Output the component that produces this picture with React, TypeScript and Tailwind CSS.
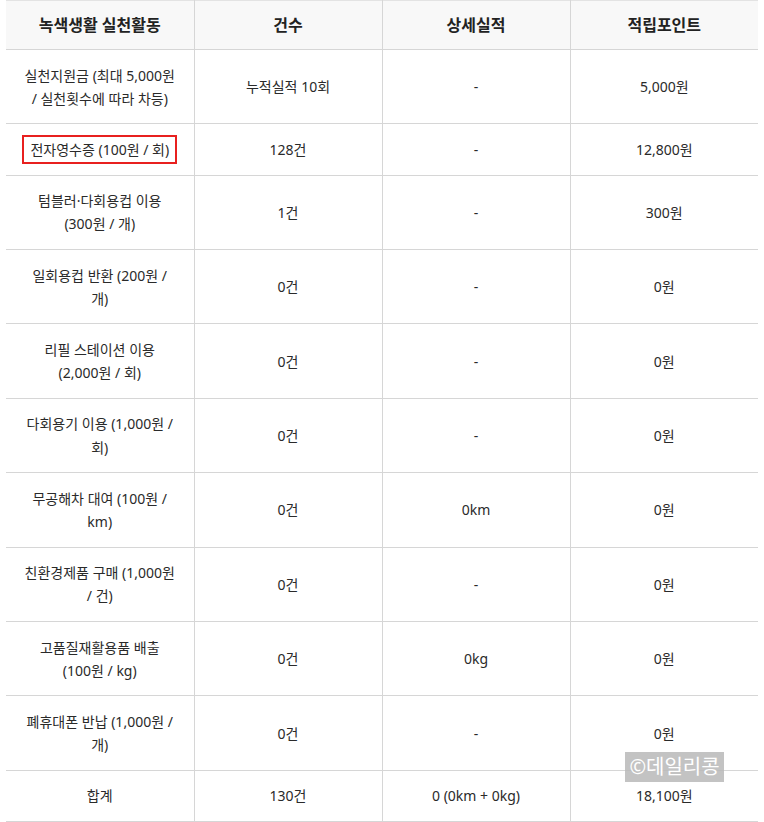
import React from "react";

type Row = { name: string[]; count: string; detail: string; point: string; mark?: boolean };

const rows: Row[] = [
  { name: ["실천지원금 (최대 5,000원", "/ 실천횟수에 따라 차등)"], count: "누적실적 10회", detail: "-", point: "5,000원" },
  { name: ["전자영수증 (100원 / 회)"], count: "128건", detail: "-", point: "12,800원", mark: true },
  { name: ["텀블러·다회용컵 이용", "(300원 / 개)"], count: "1건", detail: "-", point: "300원" },
  { name: ["일회용컵 반환 (200원 /", "개)"], count: "0건", detail: "-", point: "0원" },
  { name: ["리필 스테이션 이용", "(2,000원 / 회)"], count: "0건", detail: "-", point: "0원" },
  { name: ["다회용기 이용 (1,000원 /", "회)"], count: "0건", detail: "-", point: "0원" },
  { name: ["무공해차 대여 (100원 /", "km)"], count: "0건", detail: "0km", point: "0원" },
  { name: ["친환경제품 구매 (1,000원", "/ 건)"], count: "0건", detail: "-", point: "0원" },
  { name: ["고품질재활용품 배출", "(100원 / kg)"], count: "0건", detail: "0kg", point: "0원" },
  { name: ["폐휴대폰 반납 (1,000원 /", "개)"], count: "0건", detail: "-", point: "0원" },
  { name: ["합계"], count: "130건", detail: "0 (0km + 0kg)", point: "18,100원" },
];

const td = "border-b border-[#d6d6d6] px-[10px] py-[13.5px] text-center align-middle leading-[23.2px]";

export default function App() {
  return (
    <div
      className="relative min-h-[822px] bg-white px-[6px] text-[14px] text-[#2a2a2a]"
      style={{ fontFamily: '"Noto Sans", "Noto Sans CJK KR", sans-serif' }}
    >
      <table className="w-full table-fixed border-collapse border-t border-[#e3e3e3]">
        <thead>
          <tr className="bg-[#f8f8f8]">
            {["녹색생활 실천활동", "건수", "상세실적", "적립포인트"].map((h, i) => (
              <th
                key={h}
                className={`h-[49px] border-b border-[#d6d6d6] px-[14px] text-center text-[16px] font-bold leading-[22px] text-[#222] ${
                  i > 0 ? "border-l" : ""
                }`}
              >
                {h}
              </th>
            ))}
          </tr>
        </thead>
        <tbody>
          {rows.map((r, idx) => (
            <tr key={idx}>
              <td className={`${td} ${r.mark ? "py-[13px]" : ""}`}>
                {r.mark ? (
                  <span className="border-2 border-[#e8201f] px-[6px] py-[3px]">{r.name[0]}</span>
                ) : (
                  r.name.map((line, j) => (
                    <span key={j} className="block whitespace-nowrap">
                      {line}
                    </span>
                  ))
                )}
              </td>
              <td className={`${td} border-l`}>{r.count}</td>
              <td className={`${td} border-l`}>{r.detail}</td>
              <td className={`${td} border-l`}>{r.point}</td>
            </tr>
          ))}
        </tbody>
      </table>

      <div className="absolute left-[625px] top-[752px] flex h-[30px] w-[99px] items-center justify-center whitespace-nowrap bg-[#b8b8b8]/85 text-[20px] leading-none text-white">
        ©데일리콩
      </div>
    </div>
  );
}
